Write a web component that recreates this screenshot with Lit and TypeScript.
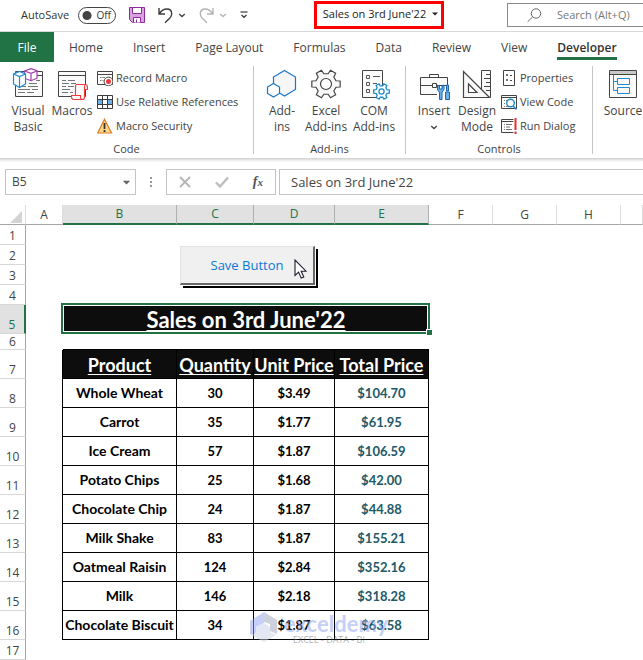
import { LitElement, html, css, svg, nothing } from "lit";
import { customElement, property } from "lit/decorators.js";

type Icon = unknown;

const gearPath = (cx: number, cy: number, r: number, ri: number, teeth: number) => {
  const pts: string[] = [];
  const step = (Math.PI * 2) / teeth;
  for (let i = 0; i < teeth; i++) {
    const a = i * step - Math.PI / 2 + step / 2;
    const at = (ang: number, rad: number) =>
      `${(cx + Math.cos(ang) * rad).toFixed(2)} ${(cy + Math.sin(ang) * rad).toFixed(2)}`;
    pts.push(at(a - step * 0.3, ri), at(a - step * 0.2, r), at(a + step * 0.2, r), at(a + step * 0.3, ri));
  }
  return `M${pts.join("L")}Z`;
};

const icons: Record<string, Icon> = {
  save: svg`<svg width="16" height="16" viewBox="0 0 16 16" fill="#d9a3e0" stroke="#8e2a9c">
    <path d="M.5.5h15v15h-12l-3-3z"/><path d="M3.5.5h9v6h-9z" fill="#fff"/><path d="M4.500 15.500v-5h7v5" fill="#fff"/><path d="M7.500 15.500v-3" fill="none"/></svg>`,
  undo: svg`<svg width="15" height="17" viewBox="0 0 15 17" fill="none" stroke="#3b3b3b" stroke-width="1.400">
    <path d="M1 1v6h6M1.300 6.700C3.500 3.500 6 2 8.700 2c3 0 5 2 5 4.700 0 2-.8 3.300-2 4.500L7 15.700"/></svg>`,
  redo: svg`<svg width="15" height="17" viewBox="0 0 15 17" fill="none" stroke="#b4b4b4" stroke-width="1.400">
    <path d="M14 1v6H8M13.700 6.700C11.500 3.500 9 2 6.300 2c-3 0-5 2-5 4.700 0 2 .8 3.300 2 4.500L8 15.700"/></svg>`,
  chevron: svg`<svg width="8" height="5" viewBox="0 0 8 5" fill="none" stroke="currentColor" stroke-width="1.400"><path d="M1.200 1L4 3.500 6.800 1"/></svg>`,
  customize: svg`<svg width="8" height="8" viewBox="0 0 8 8" fill="none" stroke="#3b3b3b"><path d="M.5 1h7" stroke-width="1.200"/><path d="M1.500 4L4 6.300 6.500 4" stroke-width="1.300"/></svg>`,
  triangle: svg`<svg width="6" height="4" viewBox="0 0 6 4" fill="currentColor"><path d="M0 .5h6L3 3.500z"/></svg>`,
  search: svg`<svg width="15" height="15" viewBox="0 0 15 15" fill="none" stroke="#666"><circle cx="9" cy="5.500" r="4.700"/><path d="M5.500 9L.7 13.800"/></svg>`,
  visualBasic: svg`<svg width="32" height="32" viewBox="0 0 32 32" fill="none">
    <path d="M3.500 3.500h27v25h-27z" fill="#fafafa" stroke="#444"/><path d="M3.500 7.500h27" stroke="#444"/>
    <path d="M24 12.500h4M17 15.500h8M8 18.500h6m2 0h10M6 21.500h12m2 0h6M6 24.500h7m2 0h7" stroke="#777"/>
    <path d="M12.500 3l6.500-2.300 6 2v7.500l-6 2.500-6.500-2.500z" fill="#fff" stroke="#a23ab0" stroke-width="1.200"/><path d="M12.500 3l6.500 2.300 6-2.300M19 5.300v7" stroke="#a23ab0" stroke-width="1.200"/>
    <path d="M1.500 6l6-2.500 6 2.500v10l-6 3.500-6-3.500z" fill="#fff" stroke="#1e8bcd" stroke-width="1.200"/><path d="M1.500 6l6 2.500 6-2.500M7.500 8.500v11" stroke="#1e8bcd" stroke-width="1.200"/></svg>`,
  macros: svg`<svg width="32" height="32" viewBox="0 0 32 32" fill="none">
    <path d="M2.500 3.500h27v25h-27z" fill="#fafafa" stroke="#444"/><path d="M2.500 7.500h27" stroke="#444"/>
    <path d="M6 12.500h4m2 0h7M6 15.500h7m2 0h5M6 18.500h4m2 0h6M6 21.500h8M6 24.500h6m2 0h3" stroke="#777"/>
    <path d="M20.500 16.500h9q2 0 2 3v2h-3v8q0 2-2 2h-9q-2 0-2-3v-1h4v-8q0-3 1-3z" fill="#fff" stroke="#ef3d3d" stroke-width="1.200"/><path d="M28.500 21.500v-3q0-2 1.500-2M19.500 27.500h5v2q0 2 2 2" stroke="#ef3d3d" stroke-width="1.200"/></svg>`,
  record: svg`<svg width="16" height="16" viewBox="0 0 16 16" fill="none">
    <path d="M.5 1.500h15v13H.5z" fill="#fff" stroke="#444"/><path d="M.5 4.500h15" stroke="#444"/><path d="M3 7.500h1.500m1 0H8M3 10.500h1.500m1 0h1" stroke="#777"/>
    <circle cx="11.500" cy="11.500" r="4.400" fill="#fff" stroke="#444"/><circle cx="11.500" cy="11.500" r="2.500" fill="#ea3a3a"/></svg>`,
  relative: svg`<svg width="16" height="14" viewBox="0 0 16 14"><path d="M.5.5h15v13H.5z" fill="#fff"/><path d="M1 5h5v4H1zM11 5h4v4h-4z" fill="#69b1e8"/>
    <path d="M.5.5h15v13H.5zM.5 4.500h15M.5 9.500h15M5.500.5v13M10.500.5v13" fill="none" stroke="#3b3b3b"/></svg>`,
  security: svg`<svg width="16" height="16" viewBox="0 0 16 16"><path d="M7.500 1.300L14.500 15H.7z" fill="#fbd88c" stroke="#e07b1f" stroke-width="1.200"/><path d="M7.500 5v6M7.500 12v2" stroke="#333" stroke-width="1.800"/></svg>`,
  addins: svg`<svg width="32" height="32" viewBox="0 0 32 32" stroke="#1a76c4" stroke-width="1.200">
    <path d="M18.500 2.500l11 6.500v12.500l-11 6.500-11-6.500V9z" fill="#f6f6f6"/><path d="M7.500 15.500l6 3.500v6.500l-6 3.500-6-3.500V19z" fill="#fff"/></svg>`,
  gear: svg`<svg width="32" height="32" viewBox="0 0 32 32" stroke="#444" stroke-width="1.200" stroke-linejoin="round">
    <path d="${gearPath(16, 16, 14.5, 10.5, 6)}" fill="#f8f8f8"/><circle cx="16" cy="16" r="5.500" fill="#fff"/></svg>`,
  com: svg`<svg width="32" height="32" viewBox="0 0 32 32" fill="none">
    <path d="M4.500 2.500h20v27h-20z" fill="#fafafa" stroke="#444"/>
    <path d="M8.500 7.500h3v3h-3zM8.500 14.500h3v3h-3zM8.500 21.500h3v3h-3zM15 8.500h7M15 15.500h4" stroke="#555"/>
    <path d="${gearPath(23.5, 23.5, 8, 5.8, 6)}" fill="#fff" stroke="#1e8bcd" stroke-width="1.300"/><circle cx="23.500" cy="23.500" r="2.600" fill="#fff" stroke="#1e8bcd" stroke-width="1.300"/></svg>`,
  insert: svg`<svg width="32" height="32" viewBox="0 0 32 32" fill="none">
    <path d="M2.500 9.500h27v17h-27z" fill="#fafafa" stroke="#444"/><path d="M11.500 9V6.500h9V9M2.500 17.500h12m4 0h11M14.500 15.500h4v4h-4z" stroke="#444"/>
    <path d="M19 18h13v14H19z" fill="#fff"/>
    <path d="M19.500 17v4q0 2 2 3v7.500h2.500V24q2-1 2-3v-4l-2 1v3h-2.500v-3zM28.500 17h2v6h-2zM27.500 24h4v7.500h-4z" fill="#69b1e8" stroke="#1a66b0"/></svg>`,
  design: svg`<svg width="32" height="32" viewBox="0 0 32 32" fill="none" stroke="#444">
    <path d="M20.500 2.500h9v27h-9z" fill="#fafafa"/><path d="M25 6.500h4M23 10.500h6M25 14.500h4M23 18.500h6M25 22.500h4"/>
    <path d="M2.500 3.500v26h26z" fill="#fafafa" stroke-width="1.200"/><path d="M7.500 16v8.500h8.500z" fill="#fff" stroke-width="1.200"/></svg>`,
  properties: svg`<svg width="16" height="16" viewBox="0 0 16 16" fill="none" stroke="#444"><path d="M2.500.5h11v15h-11z" fill="#fff"/><path d="M5.500 4.500h1v1h-1zM5.500 9.500h1v1h-1zM9 5.500h2M9 10.500h2"/></svg>`,
  viewCode: svg`<svg width="16" height="16" viewBox="0 0 16 16" fill="none"><path d="M.5 1.500h15v13H.5z" fill="#fff" stroke="#444"/><path d="M.5 3.500h15" stroke="#444"/><path d="M3 6.500h1m1 0h2M3 9.500h1M3 12.500h1m1 0h3" stroke="#777"/>
    <circle cx="9.500" cy="9" r="3.800" fill="#fff" stroke="#1e8bcd" stroke-width="1.400"/><path d="M12.200 12l3.300 3.500" stroke="#1e8bcd" stroke-width="1.600"/></svg>`,
  runDialog: svg`<svg width="16" height="16" viewBox="0 0 16 16" fill="none"><path d="M.5 1.500h15v13H.5z" fill="#fff" stroke="#444"/><path d="M.5 3.500h12" stroke="#444"/><path d="M3 6.500h1m1 0h6M3 9h1m1 0h4M3 11.500h1m1 0h6" stroke="#777"/>
    <path d="M12.500 0h3.500v16h-3.500z" fill="#fff"/><path d="M14.500 0v12M14.500 13.500v2.500" stroke="#ea2f2f" stroke-width="2"/></svg>`,
  source: svg`<svg width="32" height="32" viewBox="0 0 32 32" fill="none"><path d="M2.500 2.500h27v27h-27z" fill="#fafafa" stroke="#444"/><path d="M3 3h26v3H3z" fill="#c8c8c8"/><path d="M2.500 6.500h27" stroke="#444"/>
    <path d="M10.500 10.500h12v6h-12zM10.500 19.500h12v6h-12zM6.500 7v15.500h4M6.500 13.500h4" stroke="#1e8bcd"/></svg>`,
  cancel: svg`<svg width="12" height="12" viewBox="0 0 12 12" stroke="#b5b5b5" stroke-width="1.800"><path d="M1 1l10 10M11 1L1 11"/></svg>`,
  enter: svg`<svg width="14" height="12" viewBox="0 0 14 12" fill="none" stroke="#bdbdbd" stroke-width="2.400"><path d="M1 6.500l4 4L13 1.500"/></svg>`,
  dots: svg`<svg width="2" height="11" viewBox="0 0 2 11" fill="#999"><path d="M0 0h2v2H0zM0 4h2v2H0zM0 8h2v2H0z"/></svg>`,
  corner: svg`<svg width="12" height="12" viewBox="0 0 12 12" fill="#d4d4d4"><path d="M12 0v12H0z"/></svg>`,
  cursor: svg`<svg width="13" height="21" viewBox="0 0 13 21"><path d="M1 1v15.500l3.600-3.400 2.600 6 2.600-1.200-2.600-5.700H12z" fill="#fff" stroke="#1c1c2c" stroke-width="1.100"/></svg>`,
  brand: svg`<svg width="27" height="30" viewBox="0 0 27 30"><path d="M0 9L14 0v11L6 15v10L0 22z" fill="#8fa3f0"/><path d="M14 0l13 8v14l-7-3V12l-6-2z" fill="#9aa5b8"/><path d="M6 15l8-4 6 4v6l-7 4-7-4z" fill="#c8d0ea"/><path d="M1 23l6-3 7 4 6-4 6 3-12 7z" fill="#c9d4e4"/></svg>`,
};

const ribbonFont = css`"Open Sans", "Noto Sans", sans-serif`;

@customElement("ribbon-button")
class RibbonButton extends LitElement {
  @property() icon = "";
  @property({ attribute: false }) lines: string[] = [];
  @property({ type: Boolean }) menu = false;
  @property({ type: Boolean, reflect: true }) small = false;

  static styles = css`
    :host { display: block; }
    button {
      display: flex; flex-direction: column; align-items: center;
      width: 100%; padding: 0; border: 0; background: none; color: #444;
      font: 12px/16px ${ribbonFont}; white-space: nowrap;
    }
    .icon { display: flex; align-items: center; justify-content: center; height: 32px; margin-bottom: 3px; }
    .menu { height: 16px; display: flex; align-items: center; }
    :host([small]) button { flex-direction: row; gap: 3px; height: 24px; font-size: 11px; }
    :host([small]) .icon { width: 16px; height: 16px; margin: 0; }
  `;

  render() {
    return html`<button type="button">
      <span class="icon">${icons[this.icon]}</span>
      ${this.lines.map((l) => html`<span>${l}</span>`)}
      ${this.menu ? html`<span class="menu">${icons.chevron}</span>` : nothing}
    </button>`;
  }
}

const tabs = ["Home", "Insert", "Page Layout", "Formulas", "Data", "Review", "View", "Developer"];
const columns = ["A", "B", "C", "D", "E", "F", "G", "H", ""];
const selected = new Set(["B", "C", "D", "E"]);
const heads = ["Product", "Quantity", "Unit Price", "Total Price"];
const sales = [
  ["Whole Wheat", "30", "$3.49", "$104.70"],
  ["Carrot", "35", "$1.77", "$61.95"],
  ["Ice Cream", "57", "$1.87", "$106.59"],
  ["Potato Chips", "25", "$1.68", "$42.00"],
  ["Chocolate Chip", "24", "$1.87", "$44.88"],
  ["Milk Shake", "83", "$1.87", "$155.21"],
  ["Oatmeal Raisin", "124", "$2.84", "$352.16"],
  ["Milk", "146", "$2.18", "$318.28"],
  ["Chocolate Biscuit", "34", "$1.87", "$63.58"],
];

@customElement("app-root")
class AppRoot extends LitElement {
  static styles = css`
    :host {
      display: block; min-height: 100vh; overflow: hidden; background: #fff; color: #444;
      font: 12px/16px ${ribbonFont};
    }
    * { box-sizing: border-box; }
    button, input { font: inherit; color: inherit; }
    button { padding: 0; border: 0; background: none; }

    .title { display: flex; height: 32px; border-bottom: 1px solid #d8d8d8; padding-left: 21px; font-size: 11px; }
    .quick { display: flex; align-items: center; flex: none; width: 293px; height: 30px; }
    .autosave { display: flex; align-items: center; gap: 9px; margin-right: 13px; color: #333; }
    .switch { position: relative; display: flex; width: 38px; height: 17px; }
    .switch input {
      appearance: none; margin: 0; width: 100%; height: 100%; border: 1px solid #444; border-radius: 9px;
      background: radial-gradient(circle at 8px 50%, #444 4px, transparent 5px);
    }
    .switch span { position: absolute; right: 5px; top: 0; font-size: 10px; line-height: 16px; }
    .quick button { display: flex; margin-right: 5px; }
    .quick .more { margin-right: 13px; }
    .quick .dim { color: #b4b4b4; }
    .file {
      display: flex; align-items: center; justify-content: center; gap: 6px; flex: none;
      width: 130px; height: 28px; margin: 1px 63px 0 0; padding: 0 0 3px 3px; border: 3px solid #f00; color: #222; font-size: 11px;
    }
    .search {
      display: flex; align-items: center; gap: 15px; flex: 1; min-width: 0; height: 24px; margin-top: 3px;
      padding-left: 19px; border: 1px solid #8a8a8a; border-right: 0;
    }
    .search svg { flex: none; }
    .search input { flex: 1; min-width: 0; padding: 0; border: 0; background: none; font-size: 11px; }
    .search input::placeholder { color: #777; opacity: 1; }

    .tabs { display: flex; height: 30px; gap: 30px; font-size: 12px; }
    .tabs button { padding-top: 1px; white-space: nowrap; }
    .tabs .filetab { width: 54px; margin-right: -15px; background: #217346; color: #fff; }
    .tabs .on { position: relative; font-weight: 600; color: #333; }
    .tabs .on::after { content: ""; position: absolute; left: 0; right: 0; bottom: 2px; height: 3px; background: #217346; }

    .ribbon { display: flex; height: 96px; padding-top: 4px; }
    .group {
      display: flex; flex-direction: column; justify-content: space-between; align-items: center; flex: none;
      height: 88px; border-right: 1px solid #c6c6c6;
    }
    .tools { display: flex; align-self: flex-start; padding: 2px 0 0 8px; }
    .stack { display: flex; flex-direction: column; align-items: flex-start; height: 72px; margin: -2px 0 0 1px; }
    .label { line-height: 10px; font-size: 11px; }
    .code { width: 254px; } .addins { width: 152px; } .controls { width: 187px; } .xml { border: 0; }
    .w40 { width: 40px; } .w44 { width: 44px; } .w46 { width: 46px; } .w48 { width: 48px; }
    .shade { height: 4px; background: linear-gradient(#d0d0d0, #fff); }

    .formula { display: flex; align-items: center; height: 43px; padding: 0 0 3px 5px; font-size: 13px; }
    .box { display: flex; align-items: center; height: 26px; border: 1px solid #c4c4c4; }
    .box input { flex: 1; min-width: 0; padding: 0; border: 0; background: none; }
    .name { width: 131px; padding: 0 4px 0 6px; margin-right: 14px; }
    .name svg { width: 9px; height: 5px; color: #666; }
    .name input { font-size: 12px; }
    .actions { width: 110px; justify-content: space-between; padding: 0 12px; margin: 0 3px 0 14px; }
    .actions button { display: flex; }
    .fx { font: italic bold 14px/16px "Liberation Serif", serif; color: #555; }
    .fx small { font-size: 11px; }
    .text { flex: 1; min-width: 0; padding-left: 11px; border-right: 0; }

    .sheet { position: relative; }
    table { width: 100%; table-layout: fixed; border-collapse: separate; border-spacing: 0; }
    th, td { padding: 0; white-space: nowrap; text-align: center; font-weight: 400; }
    .c0 { width: 26px; } .cA { width: 37px; } .cB { width: 114px; } .cC { width: 77px; }
    .cD { width: 81px; } .cE { width: 94px; } .cF, .cG, .cH { width: 64px; }
    thead th { height: 20px; border-right: 1px solid #dcdcdc; border-bottom: 1px solid #a6a6a6; line-height: 18px; }
    thead th.sel { background: #e1e1e1; border-right-color: #b0b0b0; border-bottom: 2px solid #217346; color: #217346; }
    .corner svg { display: block; margin: 4px 0 0 10px; }
    tbody th { border-right: 1px solid #a6a6a6; border-bottom: 1px solid #d8d8d8; vertical-align: bottom; line-height: 16px; }
    tbody th.sel { background: #e1e1e1; border-right: 2px solid #217346; color: #217346; }
    .r20 { height: 20px; } .r16 { height: 16px; } .r29 { height: 29px; }
    .r16 th { line-height: 15px; }
    .banner {
      position: relative; background: #0d0d0d; color: #fff;
      font: bold 22px/26px Lato, sans-serif;
    }
    .banner .sel-frame {
      position: absolute; inset: -2px -1px 0 -2px; border: 2px solid #217346; box-shadow: inset 0 0 0 1px #fff;
    }
    .banner .handle {
      position: absolute; right: -3px; bottom: -1px; width: 6px; height: 6px;
      background: #217346; border: solid #fff; border-width: 1px 0 0 1px;
    }
    .banner .txt, .head { text-decoration: underline; text-decoration-thickness: 1px; text-underline-offset: 2px; text-decoration-skip-ink: none; }
    .above { border-bottom: 1px solid #000; }
    .before { border-right: 1px solid #000; }
    .head, .cell { border-right: 1px solid #000; border-bottom: 1px solid #000; }
    .head { background: #0d0d0d; color: #fff; font: bold 18px/22px Lato, sans-serif; padding-top: 1px; }
    .cell { color: #000; font: bold 13px/20px Lato, sans-serif; }
    .product { font-size: 14px; }
    .total { color: #215967; }

    .save {
      position: absolute; left: 180px; top: 41px; width: 135px; height: 39px;
      background: #f0f0f0; color: #0a78d6; border: 1px solid #e3e3e3; border-right: 2px solid #696969;
      border-bottom: 2px solid #696969; box-shadow: 1px 1px 0 #fff, 3px 3px 0 #000; font-size: 13px;
    }
    .pointer { position: absolute; left: 294px; top: 54px; display: flex; }
    .mark { position: absolute; left: 250px; top: 407px; display: flex; gap: 7px; opacity: 0.5; pointer-events: none; }
    .mark b { display: block; font: bold 22px/24px Lato, sans-serif; color: #8fa3f0; }
    .mark i { display: block; padding-left: 9px; font: normal 9px/8px "Open Sans", sans-serif; color: #666; }
  `;

  private row(n: number, size: string, cells: unknown, sel = false) {
    return html`<tr class=${size}><th scope="row" class=${sel ? "sel" : ""}>${n}</th>${cells}</tr>`;
  }

  render() {
    const blank = (n: number) => html`<td colspan=${n}></td>`;
    const cellClass = (j: number) => (j === 0 ? "cell product" : j === 3 ? "cell total" : "cell");
    return html`
      <header class="title">
        <div class="quick">
          <label class="autosave">AutoSave
            <span class="switch"><input type="checkbox" role="switch" /><span>Off</span></span>
          </label>
          <button class="more" aria-label="Save">${icons.save}</button>
          <button aria-label="Undo">${icons.undo}</button>
          <button class="more" aria-label="Undo history">${icons.chevron}</button>
          <button aria-label="Redo">${icons.redo}</button>
          <button class="more dim" aria-label="Redo history">${icons.chevron}</button>
          <button aria-label="Customize toolbar">${icons.customize}</button>
        </div>
        <button class="file">Sales on 3rd June'22 ${icons.triangle}</button>
        <label class="search">${icons.search}<input type="text" aria-label="Search" placeholder="Search (Alt+Q)" /></label>
      </header>
      <nav class="tabs">
        <button class="filetab">File</button>
        ${tabs.map((t) => html`<button class=${t === "Developer" ? "on" : ""}>${t}</button>`)}
      </nav>
      <section class="ribbon">
        <div class="group code">
          <div class="tools">
            <ribbon-button class="w40" icon="visualBasic" .lines=${["Visual", "Basic"]}></ribbon-button>
            <ribbon-button class="w48" icon="macros" .lines=${["Macros"]}></ribbon-button>
            <div class="stack">
              <ribbon-button small icon="record" .lines=${["Record Macro"]}></ribbon-button>
              <ribbon-button small icon="relative" .lines=${["Use Relative References"]}></ribbon-button>
              <ribbon-button small icon="security" .lines=${["Macro Security"]}></ribbon-button>
            </div>
          </div>
          <span class="label">Code</span>
        </div>
        <div class="group addins">
          <div class="tools">
            <ribbon-button class="w40" icon="addins" .lines=${["Add-", "ins"]}></ribbon-button>
            <ribbon-button class="w48" icon="gear" .lines=${["Excel", "Add-ins"]}></ribbon-button>
            <ribbon-button class="w48" icon="com" .lines=${["COM", "Add-ins"]}></ribbon-button>
          </div>
          <span class="label">Add-ins</span>
        </div>
        <div class="group controls">
          <div class="tools">
            <ribbon-button class="w40" icon="insert" menu .lines=${["Insert"]}></ribbon-button>
            <ribbon-button class="w46" icon="design" .lines=${["Design", "Mode"]}></ribbon-button>
            <div class="stack">
              <ribbon-button small icon="properties" .lines=${["Properties"]}></ribbon-button>
              <ribbon-button small icon="viewCode" .lines=${["View Code"]}></ribbon-button>
              <ribbon-button small icon="runDialog" .lines=${["Run Dialog"]}></ribbon-button>
            </div>
          </div>
          <span class="label">Controls</span>
        </div>
        <div class="group xml">
          <div class="tools"><ribbon-button class="w44" icon="source" .lines=${["Source"]}></ribbon-button></div>
        </div>
      </section>
      <div class="shade"></div>
      <section class="formula">
        <label class="box name"><input aria-label="Name box" value="B5" />${icons.triangle}</label>
        ${icons.dots}
        <div class="box actions">
          <button aria-label="Cancel">${icons.cancel}</button>
          <button aria-label="Enter">${icons.enter}</button>
          <button class="fx" aria-label="Insert function">f<small>x</small></button>
        </div>
        <div class="box text"><input aria-label="Formula bar" value="Sales on 3rd June'22" /></div>
      </section>
      <main class="sheet">
        <table>
          <colgroup><col class="c0" />${columns.map((c) => html`<col class=${c ? "c" + c : ""} />`)}</colgroup>
          <thead><tr>
            <th class="corner">${icons.corner}</th>
            ${columns.map((c) => html`<th scope="col" class=${selected.has(c) ? "sel" : ""}>${c}</th>`)}
          </tr></thead>
          <tbody>
            ${[1, 2, 3, 4].map((n) => this.row(n, "r20", blank(9)))}
            ${this.row(5, "r29", html`<td></td><td class="banner" colspan="4"><span class="sel-frame"></span><span class="handle"></span><span class="txt">Sales on 3rd June'22</span></td>${blank(4)}`, true)}
            ${this.row(6, "r16", html`<td></td><td class="above" colspan="4"></td>${blank(4)}`)}
            ${this.row(7, "r29", html`<td class="before"></td>${heads.map((h) => html`<td class="head">${h}</td>`)}${blank(4)}`)}
            ${sales.map((s, i) => this.row(8 + i, "r29", html`<td class="before"></td>${s.map((v, j) => html`<td class=${cellClass(j)}>${v}</td>`)}${blank(4)}`))}
            ${this.row(17, "r20", blank(9))}
          </tbody>
        </table>
        <button class="save">Save Button</button>
        <span class="pointer">${icons.cursor}</span>
        <div class="mark">${icons.brand}<span><b>exceldemy</b><i>EXCEL - DATA - BI</i></span></div>
      </main>
    `;
  }
}
